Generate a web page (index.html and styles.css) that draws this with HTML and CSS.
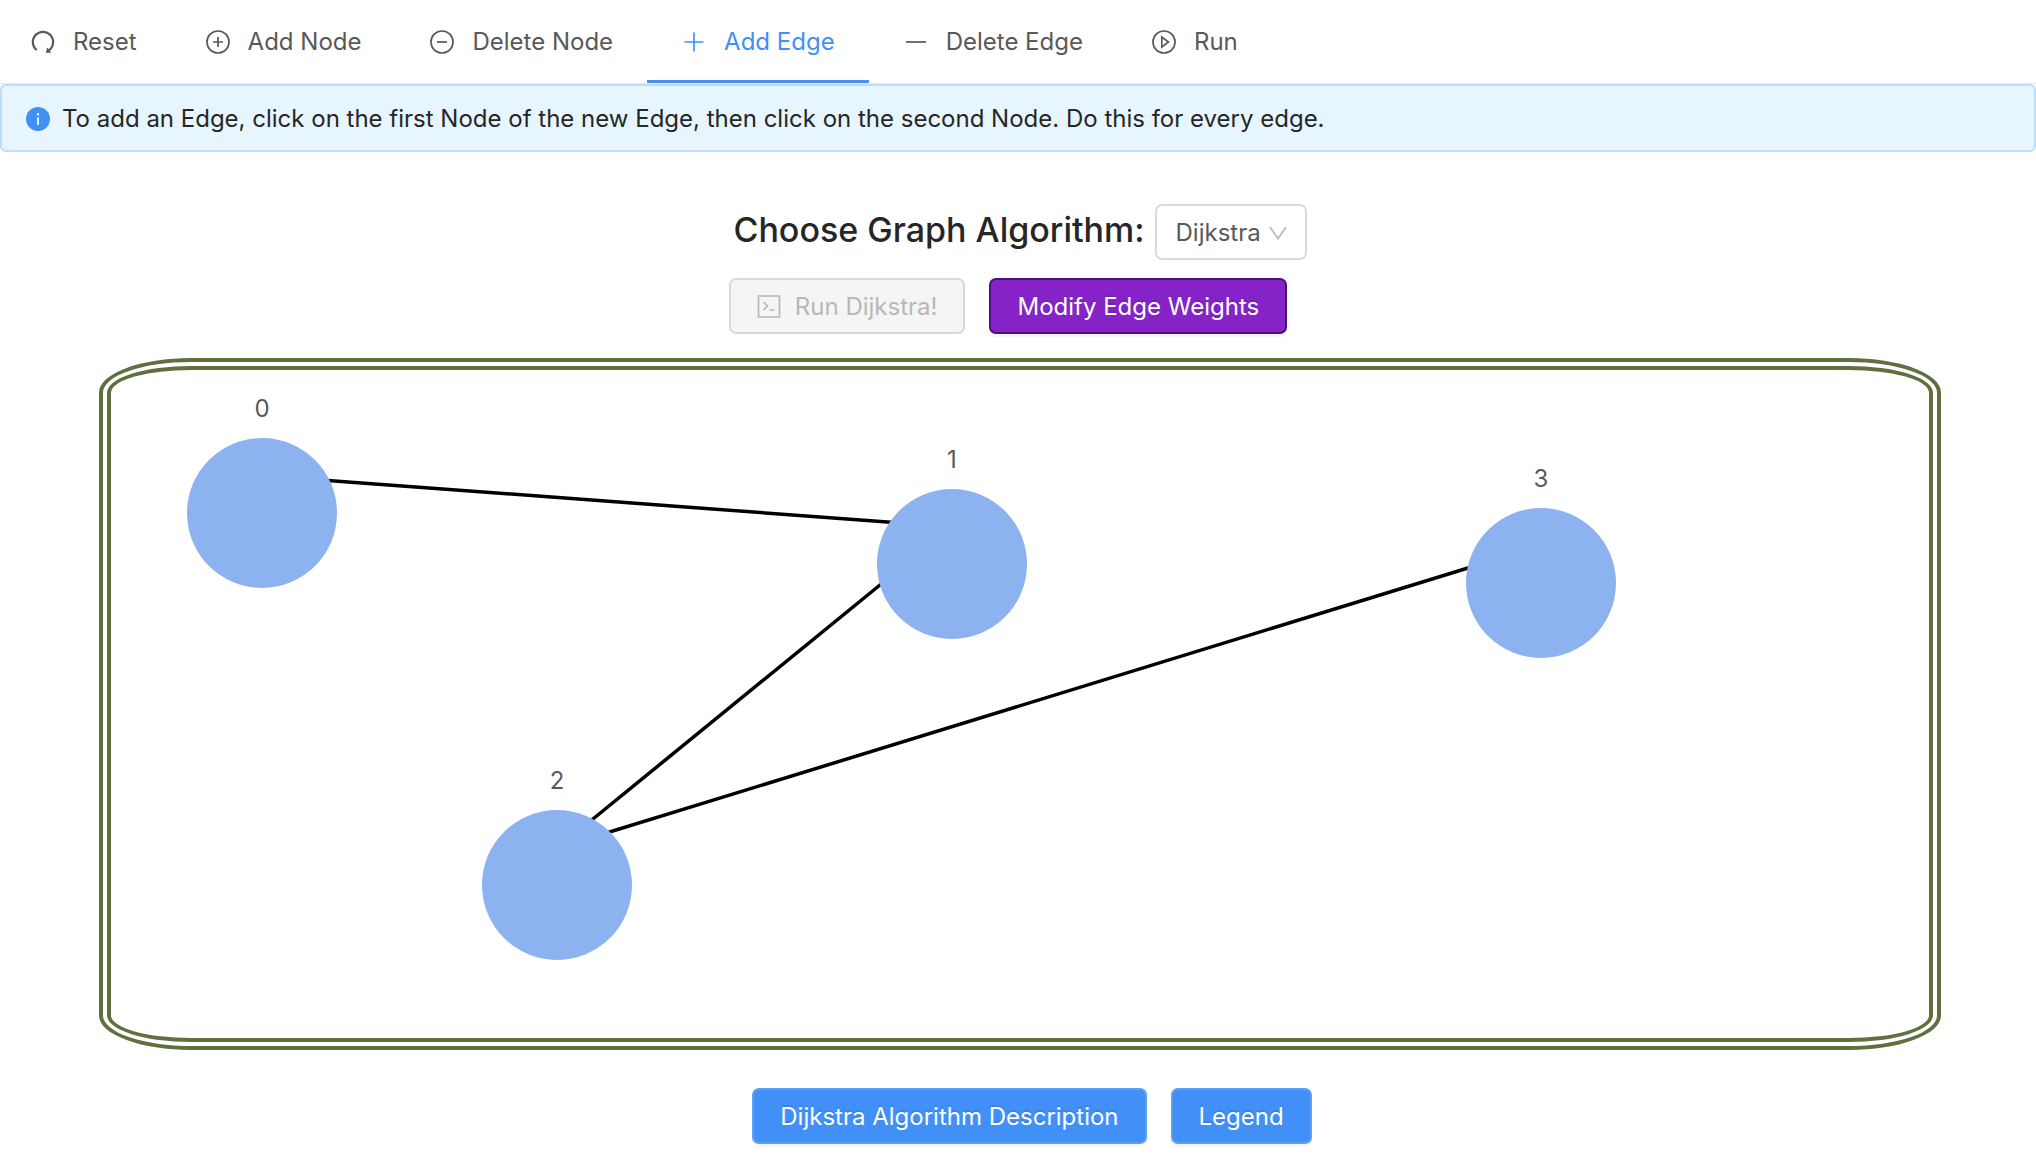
FILE: index.html
```html
<!DOCTYPE html>
<html lang="en">
<head>
<meta charset="utf-8">
<meta name="viewport" content="width=device-width, initial-scale=1">
<title>Graph Algorithms</title>
<link rel="stylesheet" href="styles.css">
</head>
<body>
<nav class="menu">
  <button class="menu-item" type="button">
    <svg class="icon" viewBox="87 95 850 850"><path d="M758.2 839.1C851.8 765.9 912 651.9 912 523.9 912 303 733.5 124.3 512.6 124 291.4 123.700 112 302.800 112 523.900c0 125.200 57.500 236.900 147.600 310.200 3.500 2.800 8.600 2.200 11.400-1.300l39.400-50.500c2.700-3.400 2.100-8.300-1.200-11.100-8.100-6.600-15.900-13.700-23.400-21.200a318.640 318.640 0 0 1-68.600-101.700C200.400 609 192 567.100 192 523.900s8.400-85.100 25.100-124.500c16.100-38.100 39.200-72.300 68.600-101.700 29.400-29.400 63.600-52.500 101.700-68.600C426.900 212.400 468.800 204 512 204s85.100 8.400 124.500 25.100c38.100 16.100 72.300 39.200 101.700 68.600 29.400 29.400 52.500 63.600 68.600 101.700 16.700 39.400 25.100 81.300 25.100 124.500s-8.400 85.100-25.100 124.500a318.640 318.640 0 0 1-68.600 101.700c-9.300 9.300-19.100 18-29.300 26L668.200 724a8 8 0 0 0-14.100 3l-39.600 162.200c-1.200 5 2.600 9.900 7.700 9.900l167 .800c6.700 0 10.500-7.700 6.300-12.900l-37.300-47.900z"/></svg>
    <span>Reset</span>
  </button>
  <button class="menu-item" type="button">
    <svg class="icon" viewBox="0 0 24 24"><g class="stroke"><circle cx="12" cy="12" r="11"/><path d="M7 12h10M12 7v10"/></g></svg>
    <span>Add Node</span>
  </button>
  <button class="menu-item" type="button">
    <svg class="icon" viewBox="0 0 24 24"><g class="stroke"><circle cx="12" cy="12" r="11"/><path d="M7 12h10"/></g></svg>
    <span>Delete Node</span>
  </button>
  <button class="menu-item menu-item-selected" type="button">
    <svg class="icon" viewBox="0 0 24 24"><path class="stroke" d="M2.500 12h19M12 2.500v19"/></svg>
    <span>Add Edge</span>
  </button>
  <button class="menu-item" type="button">
    <svg class="icon" viewBox="0 0 24 24"><path class="stroke" d="M2 12h20"/></svg>
    <span>Delete Edge</span>
  </button>
  <button class="menu-item" type="button">
    <svg class="icon" viewBox="0 0 24 24"><g class="stroke"><circle cx="12" cy="12" r="11"/><path d="M9.800 7v10l6.700-5z"/></g></svg>
    <span>Run</span>
  </button>
</nav>

<div class="alert" role="status">
  <svg class="icon alert-icon" viewBox="0 0 24 24"><circle cx="12" cy="12" r="12"/><path class="info-mark" d="M12 10.500v7.500"/><circle class="info-dot" cx="12" cy="7.200" r="1.200"/></svg>
  <span>To add an Edge, click on the first Node of the new Edge, then click on the second Node. Do this for every edge.</span>
</div>

<main class="page">
  <div class="chooser">
    <label class="chooser-label" for="algorithm">Choose Graph Algorithm:</label>
    <div class="select">
      <select id="algorithm" class="select-box"><option>Dijkstra</option></select>
      <svg class="select-arrow" viewBox="0 0 18 18"><path d="M1 3 9 14.500 17 3"/></svg>
    </div>
  </div>
  <div class="actions">
    <button class="btn btn-disabled" type="button" disabled>
      <svg class="icon" viewBox="0 0 24 24"><g class="stroke"><path d="M1.500 1h21v21h-21z"/><path d="m6.500 7 4 4-4 4M12.500 15h5"/></g></svg>
      <span>Run Dijkstra!</span>
    </button>
    <button class="btn btn-purple" type="button">Modify Edge Weights</button>
  </div>

  <section class="board" aria-label="Graph">
    <svg class="edges" stroke="#000" stroke-width="3.500">
      <line x1="210" y1="110" x2="790" y2="153"/>
      <line x1="780" y1="206" x2="466" y2="462"/>
      <line x1="466" y1="472" x2="1370" y2="194"/>
    </svg>
    <div class="node node-0"><span class="node-label">0</span></div>
    <div class="node node-1"><span class="node-label">1</span></div>
    <div class="node node-2"><span class="node-label">2</span></div>
    <div class="node node-3"><span class="node-label">3</span></div>
  </section>

  <div class="footer-actions">
    <button class="btn btn-primary" type="button">Dijkstra Algorithm Description</button>
    <button class="btn btn-primary" type="button">Legend</button>
  </div>
</main>
</body>
</html>
```
FILE: styles.css
```css
* {
  box-sizing: border-box;
}

body {
  margin: 0;
  background: #fff;
  color: #595959;
  font: 24px/36px Inter, "Liberation Sans", sans-serif;
}

button,
select {
  font: inherit;
  color: inherit;
}

.icon {
  flex: none;
  width: 24px;
  height: 24px;
  fill: currentColor;
}

.stroke {
  fill: none;
  stroke: currentColor;
  stroke-width: 1.7;
}

.menu {
  display: flex;
  border-bottom: 1px solid #e8e8e8;
}

.menu-item {
  display: flex;
  align-items: center;
  gap: 18px;
  height: 83px;
  padding: 4px 34px 0 35px;
  border: 0;
  border-bottom: 3px solid transparent;
  background: none;
  white-space: nowrap;
}

.menu-item:first-child {
  padding-left: 31px;
}

.menu-item-selected {
  border-bottom-color: #4a90e8;
  color: #4190f7;
}

.alert {
  display: flex;
  align-items: center;
  gap: 12px;
  min-height: 68px;
  padding: 15px 24px 13px;
  border: 2px solid #bbdefa;
  border-radius: 6px;
  background: #e7f6fe;
  color: #262626;
}

.alert-icon {
  fill: #4190f7;
}

.info-mark {
  stroke: #e7f6fe;
  stroke-width: 2;
}

.info-dot {
  fill: #e7f6fe;
}

.page {
  padding: 52px 95px 8px 99px;
}

.chooser,
.actions,
.footer-actions {
  display: flex;
  justify-content: center;
}

.chooser {
  gap: 10px;
}

.chooser-label {
  color: #262626;
  font-size: 34px;
  font-weight: 500;
  line-height: 52px;
}

.select {
  position: relative;
}

.select-box {
  appearance: none;
  height: 56px;
  padding: 2px 43px 0 19px;
  border: 2px solid #d9d9d9;
  border-radius: 7px;
  background: #fff;
}

.select-arrow {
  position: absolute;
  top: 20px;
  right: 20px;
  width: 18px;
  height: 18px;
  fill: none;
  stroke: #bfbfbf;
  stroke-width: 2;
  pointer-events: none;
}

.actions {
  gap: 24px;
  margin: 18px 24px 24px 0;
}

.btn {
  display: flex;
  align-items: center;
  justify-content: center;
  gap: 14px;
  height: 56px;
  padding: 2px 26px 0;
  border: 2px solid;
  border-radius: 7px;
  white-space: nowrap;
}

.btn-disabled {
  border-color: #d9d9d9;
  background: #f5f5f5;
  color: #b8b8b8;
}

.btn-purple,
.btn-primary {
  box-shadow: 0 3px 0 rgba(0, 0, 0, 0.04);
  color: #fff;
  text-shadow: 0 -2px 0 rgba(0, 0, 0, 0.1);
}

.btn-purple {
  border-color: #4b0f80;
  background: #8623c8;
}

.btn-primary {
  border-color: #5ba0f2;
  background: #4190f7;
}

.board {
  position: relative;
  height: 692px;
  border: 12px double #5f6f3d;
  border-radius: 5%;
}

.edges {
  position: absolute;
  inset: 0;
  width: 100%;
  height: 100%;
}

.node {
  position: absolute;
  width: 150px;
  height: 150px;
  border-radius: 50%;
  background: #8db2f0;
}

.node-label {
  position: absolute;
  top: -47px;
  left: 0;
  width: 100%;
  text-align: center;
}

.node-0 {
  left: 76px;
  top: 68px;
}

.node-1 {
  left: 766px;
  top: 119px;
}

.node-2 {
  left: 371px;
  top: 440px;
}

.node-3 {
  left: 1355px;
  top: 138px;
}

.footer-actions {
  gap: 24px;
  margin: 38px 0 0 24px;
}
```
